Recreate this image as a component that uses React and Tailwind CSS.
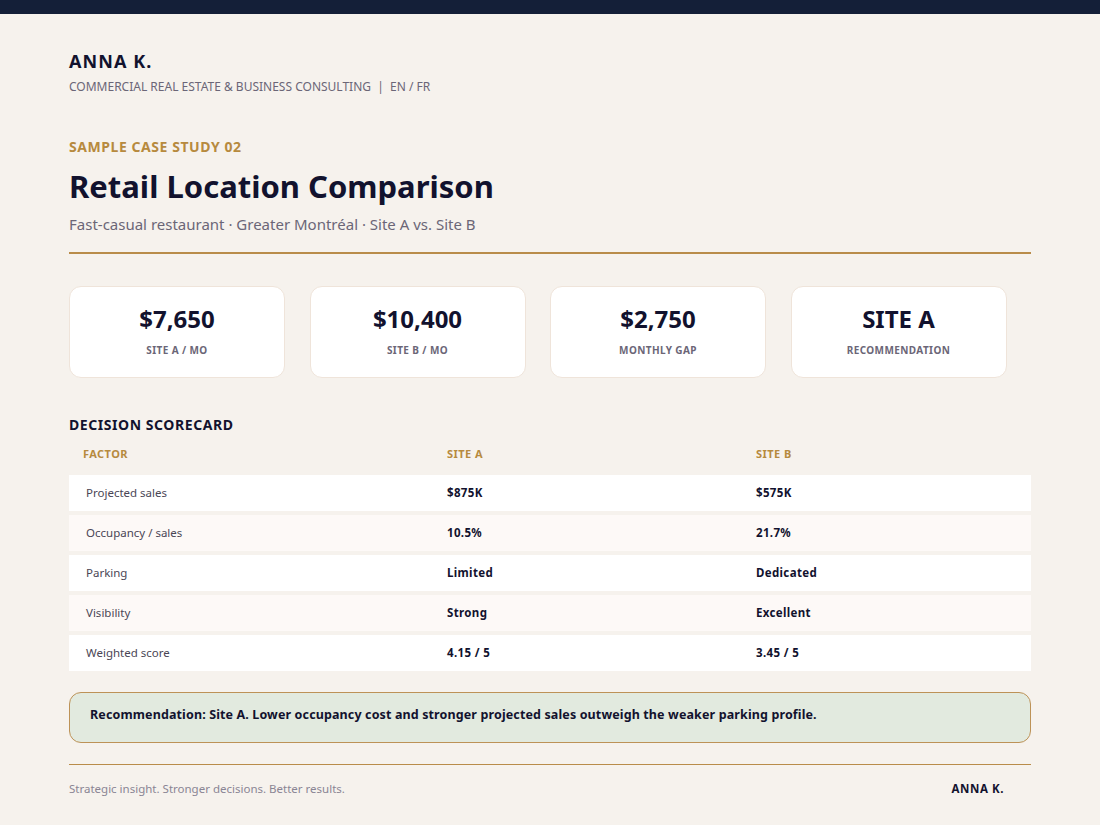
import React from 'react'

const STATS = [
  { value: '$7,650', label: 'SITE A / MO' },
  { value: '$10,400', label: 'SITE B / MO' },
  { value: '$2,750', label: 'MONTHLY GAP' },
  { value: 'SITE A', label: 'RECOMMENDATION' },
]

const ROWS = [
  ['Projected sales', '$875K', '$575K'],
  ['Occupancy / sales', '10.5%', '21.7%'],
  ['Parking', 'Limited', 'Dedicated'],
  ['Visibility', 'Strong', 'Excellent'],
  ['Weighted score', '4.15 / 5', '3.45 / 5'],
]

export default function App() {
  return (
    <div className="min-h-[825px] bg-[#f6f2ed] font-[family-name:'DejaVu_Sans',sans-serif]">
      <div className="h-[14px] bg-[#141f38]" />
      <div className="px-[69px]">
        {/* Header */}
        <div className="pt-[35px] text-[18px] font-bold tracking-[0.06em] text-[#12122e] leading-[24px]">ANNA K.</div>
        <div className="mt-[6px] text-[12px] text-[#6b6677] leading-[16px]">
          COMMERCIAL REAL ESTATE &amp; BUSINESS CONSULTING&nbsp;&nbsp;|&nbsp;&nbsp;EN / FR
        </div>

        <div className="mt-[43px] text-[14px] font-bold tracking-[0.04em] text-[#b78a3e] leading-[18px]">SAMPLE CASE STUDY 02</div>
        <h1 className="mt-[11px] text-[31px] font-bold text-[#12122e] leading-[38px]">Retail Location Comparison</h1>
        <div className="mt-[9px] text-[15px] text-[#6b6677] leading-[20px]">Fast-casual restaurant · Greater Montréal · Site A vs. Site B</div>
        <div className="mt-[18px] h-[2px] bg-[#b98c4a]" />

        {/* Stats */}
        <div className="mt-[32px] flex gap-[24.5px]">
          {STATS.map(s => (
            <div key={s.label} className="w-[216px] h-[92px] rounded-[12px] bg-white border border-[#efe4da] flex flex-col items-center pt-[17px]">
              <div className="text-[24px] font-bold text-[#12122e] leading-[30px]">{s.value}</div>
              <div className="mt-[9px] text-[10px] font-bold tracking-[0.04em] text-[#6b6677]">{s.label}</div>
            </div>
          ))}
        </div>

        {/* Scorecard */}
        <div className="mt-[37px] text-[14px] font-bold tracking-[0.04em] text-[#12122e] leading-[20px]">DECISION SCORECARD</div>
        <div className="mt-[9px] flex text-[11px] font-bold tracking-[0.04em] text-[#b78a3e] h-[20px] items-center">
          <div className="w-[378px] pl-[14px]">FACTOR</div>
          <div className="w-[309px]">SITE A</div>
          <div className="flex-1">SITE B</div>
        </div>
        <div className="mt-[11px] flex flex-col gap-[4px]">
          {ROWS.map((r, i) => (
            <div key={r[0]} className={(i % 2 ? 'bg-[#fdf9f7]' : 'bg-white') + ' h-[36px] flex items-center text-[11.5px]'}>
              <div className="w-[378px] pl-[17px] text-[#4a4655]">{r[0]}</div>
              <div className="w-[309px] font-bold text-[#12122e] tracking-[0.03em]">{r[1]}</div>
              <div className="flex-1 font-bold text-[#12122e] tracking-[0.03em]">{r[2]}</div>
            </div>
          ))}
        </div>

        {/* Recommendation */}
        <div className="mt-[21px] h-[51px] rounded-[12px] border border-[#bd9257] bg-[#e2eadf] flex items-center pl-[20px] pb-[4px] text-[12.5px] font-bold text-[#12122e] tracking-[0.01em]">
          Recommendation: Site A. Lower occupancy cost and stronger projected sales outweigh the weaker parking profile.
        </div>

        {/* Footer */}
        <div className="mt-[21px] h-px bg-[#b98c4a]" />
        <div className="mt-[15px] flex justify-between items-center pr-[27px]">
          <div className="text-[11.5px] text-[#8a8594]">Strategic insight. Stronger decisions. Better results.</div>
          <div className="text-[11.5px] font-bold tracking-[0.05em] text-[#12122e]">ANNA K.</div>
        </div>
      </div>
    </div>
  )
}
